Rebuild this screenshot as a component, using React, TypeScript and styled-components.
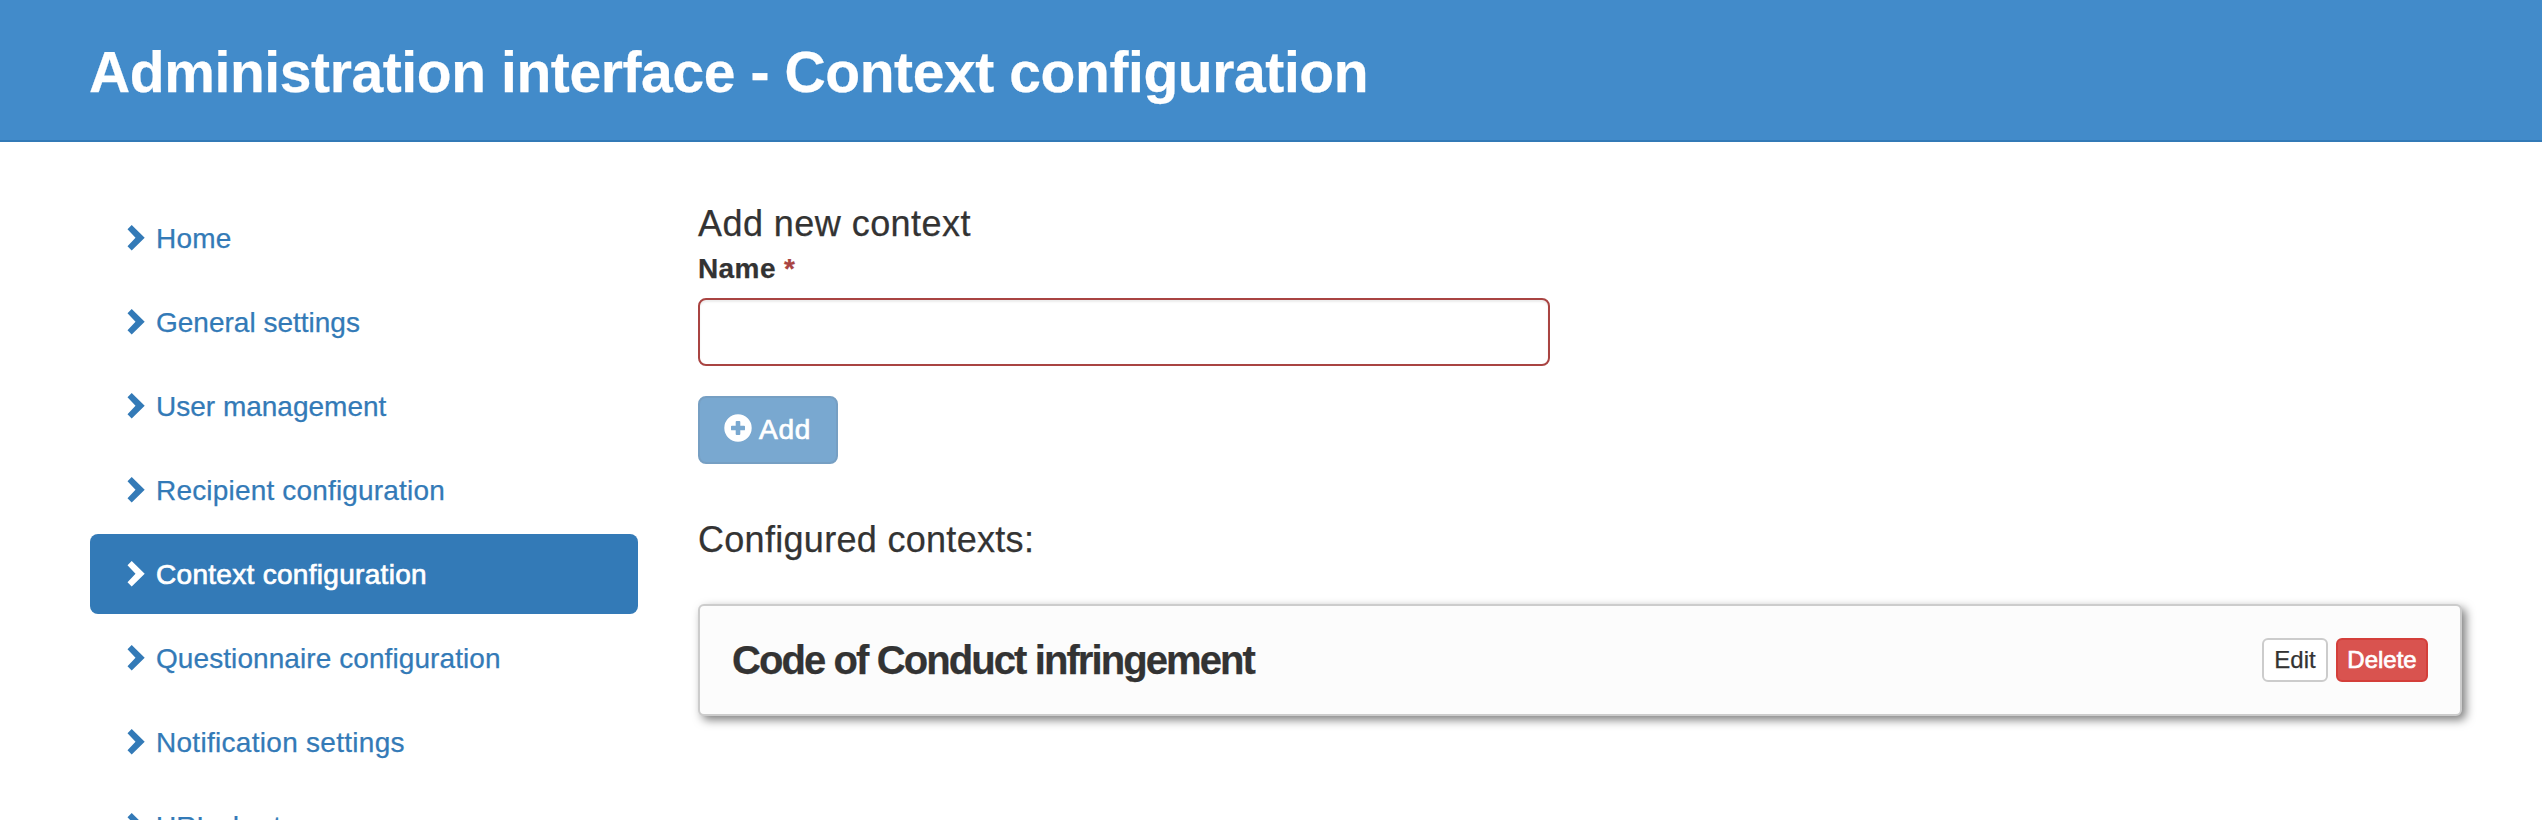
import React from "react";
import styled, { createGlobalStyle } from "styled-components";

const GlobalStyle = createGlobalStyle`
  * { box-sizing: border-box; }
  html { overflow: hidden; }
  body {
    margin: 0;
    height: 820px;
    overflow: hidden;
    background: #fff;
    color: #333;
    font-family: "Liberation Sans", Arial, sans-serif;
    font-size: 28px;
    line-height: 40px;
  }
`;

const Fit = styled.span<{ $ls?: number; $heavy?: boolean }>`
  letter-spacing: ${(p) => p.$ls ?? 0}px;
  -webkit-text-stroke: ${(p) => (p.$heavy ? 0.7 : 0.25)}px currentColor;
  white-space: nowrap;
`;

const Page = styled.div`
  height: 820px;
  overflow: hidden;
`;

const Header = styled.header`
  height: 142px;
  padding: 40px 89px 0;
  background: #428bca;
  border-bottom: 2px solid #337ab7;
`;

const Title = styled.h1`
  margin: 0;
  color: #fff;
  font-size: 57px;
  font-weight: 700;
  line-height: 64px;
`;

const Body = styled.div`
  display: flex;
  gap: 60px;
  padding: 56px 80px 0 90px;
`;

const Nav = styled.nav`
  display: flex;
  flex-direction: column;
  gap: 4px;
  width: 548px;
  flex: none;
`;

const NavItem = styled.a<{ $active?: boolean }>`
  display: flex;
  align-items: center;
  height: 80px;
  padding: 0 30px;
  border-radius: 8px;
  color: ${(p) => (p.$active ? "#fff" : "#337ab7")};
  background: ${(p) => (p.$active ? "#337ab7" : "transparent")};
  text-decoration: none;
`;

const NavText = styled.span`
  padding-top: 2px;
`;

const NavIcon = styled.svg`
  width: 28px;
  height: 28px;
  margin-right: 8px;
  fill: currentColor;
`;

const Main = styled.main`
  flex: 1;
  display: flex;
  flex-direction: column;
  align-items: flex-start;
`;

const Heading = styled.h4`
  margin: 0;
  padding-top: 6px;
  font-size: 36px;
  font-weight: 400;
  line-height: 40px;
`;

const Label = styled.label`
  margin: 5px 0 9px;
  font-weight: 700;
  line-height: 40px;
`;

const Required = styled.span`
  color: #a94442;
`;

const NameInput = styled.input`
  width: 852px;
  height: 68px;
  padding: 12px 24px;
  border: 2px solid #a94442;
  border-radius: 8px;
  background: #fff;
  box-shadow: inset 0 2px 2px rgba(0, 0, 0, 0.075);
  font: inherit;
`;

const AddButton = styled.button`
  display: flex;
  align-items: center;
  width: 140px;
  height: 68px;
  margin: 30px 0 50px;
  padding: 0 24px;
  border: 2px solid #2e6da4;
  border-radius: 8px;
  background: #337ab7;
  color: #fff;
  font: inherit;
  opacity: 0.65;
`;

const AddIcon = styled.svg`
  flex: none;
  width: 28px;
  height: 28px;
  margin: -4px 7px 0 0;
  fill: currentColor;
`;

const Card = styled.section`
  display: flex;
  align-items: center;
  gap: 8px;
  align-self: stretch;
  height: 112px;
  margin-top: 44px;
  padding: 0 32px;
  border: 2px solid #ccc;
  border-radius: 6px;
  background: #fcfcfc;
  box-shadow: 4px 4px 10px rgba(0, 0, 0, 0.5);
`;

const CardTitle = styled.h3`
  flex: 1;
  margin: 0;
  font-size: 40px;
  font-weight: 700;
`;

const SmallButton = styled.button<{ $danger?: boolean }>`
  width: ${(p) => (p.$danger ? 92 : 66)}px;
  height: 44px;
  padding: 0;
  border: 2px solid ${(p) => (p.$danger ? "#d43f3a" : "#ccc")};
  border-radius: 6px;
  background: ${(p) => (p.$danger ? "#d9534f" : "#fff")};
  color: ${(p) => (p.$danger ? "#fff" : "#333")};
  font: inherit;
  font-size: 24px;
  line-height: 40px;
`;

const items = [
  { label: "Home", ls: 0.2 },
  { label: "General settings", ls: 0 },
  { label: "User management", ls: 0 },
  { label: "Recipient configuration", ls: 0.18 },
  { label: "Context configuration", ls: 0.3, active: true },
  { label: "Questionnaire configuration", ls: 0.08 },
  { label: "Notification settings", ls: 0.29 },
  { label: "URL shortener", ls: 0 },
];

export default function App() {
  return (
    <Page>
      <GlobalStyle />
      <Header>
        <Title><Fit $ls={-0.4}>Administration interface - Context configuration</Fit></Title>
      </Header>
      <Body>
        <Nav>
          {items.map((item) => (
            <NavItem key={item.label} $active={item.active}>
              <NavIcon viewBox="0 0 28 28">
                <path d="M7.5 5.2 11.7 1 24.7 13.7 11.7 26.4 7.5 22.2 15.5 13.7Z" />
              </NavIcon>
              <NavText><Fit $ls={item.ls} $heavy={item.active}>{item.label}</Fit></NavText>
            </NavItem>
          ))}
        </Nav>
        <Main>
          <Heading><Fit $ls={0.45}>Add new context</Fit></Heading>
          <Label htmlFor="name"><Fit $ls={0.4}>Name <Required>*</Required></Fit></Label>
          <NameInput id="name" />
          <AddButton disabled>
            <AddIcon viewBox="0 0 28 28">
              <path fillRule="evenodd" d="M14 .3a13.7 13.7 0 1 0 0 27.4A13.7 13.7 0 0 0 14 .3ZM12.6 7h2.8q.9 0 .9.9v3.8h3.8q.9 0 .9.9v2.8q0 .9-.9.9h-3.8v3.8q0 .9-.9.9h-2.8q-.9 0-.9-.9v-3.8H7.9q-.9 0-.9-.9v-2.8q0-.9.9-.9h3.8V7.9q0-.9.9-.9Z" />
            </AddIcon>
            <Fit $ls={0.8} $heavy>Add</Fit>
          </AddButton>
          <Heading><Fit $ls={0.3}>Configured contexts:</Fit></Heading>
          <Card>
            <CardTitle><Fit $ls={-1.91}>Code of Conduct infringement</Fit></CardTitle>
            <SmallButton><Fit>Edit</Fit></SmallButton>
            <SmallButton $danger><Fit $heavy>Delete</Fit></SmallButton>
          </Card>
        </Main>
      </Body>
    </Page>
  );
}
